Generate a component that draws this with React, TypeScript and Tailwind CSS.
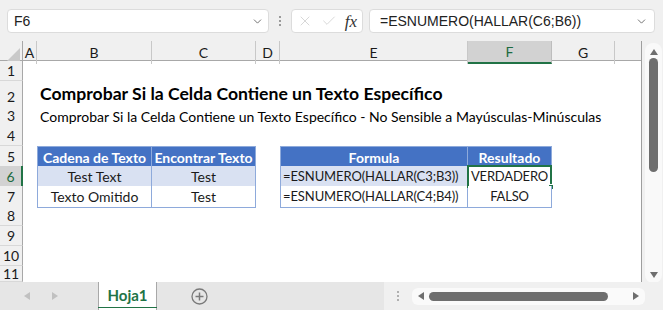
import { X, Check, ChevronDown } from "lucide-react";

const cols = "grid grid-cols-[23px_14px_115px_104px_24px_188px_84px_63px_27px]";
const rowHeights = [20, 25, 20, 20, 20, 20, 20, 20, 20, 20, 16];
const colLetters = ["A", "B", "C", "D", "E", "F", "G", ""];

const th = "flex items-center justify-center bg-[#4472c4] text-white font-bold border-r border-b border-t border-[#8eaadb]";
const td = "flex items-center justify-center border-r border-b border-[#8eaadb]";

function RowContent({ r }: { r: number }) {
  if (r === 2)
    return (
      <>
        <div />
        <div className="col-span-7 flex items-end pl-[3px] pb-[2px] text-[17.6px] font-bold text-black whitespace-nowrap">
          Comprobar Si la Celda Contiene un Texto Específico
        </div>
      </>
    );
  if (r === 3)
    return (
      <>
        <div />
        <div className="col-span-7 flex items-center pl-[3px] text-[14px] text-black whitespace-nowrap">
          Comprobar Si la Celda Contiene un Texto Específico - No Sensible a Mayúsculas-Minúsculas
        </div>
      </>
    );
  if (r === 5)
    return (
      <>
        <div />
        <div className={`${th} border-l`}>Cadena de Texto</div>
        <div className={th}>Encontrar Texto</div>
        <div />
        <div className={`${th} border-l`}>Formula</div>
        <div className={th}>Resultado</div>
      </>
    );
  if (r === 6 || r === 7) {
    const band = r === 6 ? "bg-[#d9e1f2]" : "bg-white";
    return (
      <>
        <div />
        <div className={`${td} ${band} border-l`}>{r === 6 ? "Test Text" : "Texto Omitido"}</div>
        <div className={`${td} ${band}`}>Test</div>
        <div />
        <div className={`${td} ${band} border-l justify-start pl-[2px] text-[13px] tracking-[-0.1px] whitespace-nowrap`}>
          {r === 6 ? "=ESNUMERO(HALLAR(C3;B3))" : "=ESNUMERO(HALLAR(C4;B4))"}
        </div>
        <div className={`${td} relative bg-white text-[13px] tracking-[-0.2px]`}>
          {r === 6 ? "VERDADERO" : "FALSO"}
          {r === 6 && (
            <div className="absolute -left-[1px] -top-[1px] -right-[1px] -bottom-[1px] border-2 border-[#217346]">
              <div className="absolute -right-[4px] -bottom-[4px] w-[6px] h-[6px] bg-[#217346] border border-white" />
            </div>
          )}
        </div>
      </>
    );
  }
  return null;
}

export default function App() {
  return (
    <div className="w-[663px] h-[310px] overflow-hidden bg-[#f0f0f0] flex flex-col font-['Lato',sans-serif] text-[14px] text-[#1a1a1a]">
      {/* Formula bar */}
      <div className="h-[41px] flex items-start pt-[9px] pl-[7px] shrink-0 font-['Liberation_Sans',sans-serif]">
        <div className="w-[262px] h-[24px] bg-white border border-[#dcdcdc] rounded-[4px] flex items-center pl-[6px] pr-[4px] text-[14px] text-[#222]">
          <span className="flex-1">F6</span>
          <ChevronDown size={13} strokeWidth={1.5} className="text-[#555]" />
        </div>
        <div className="w-[22px] h-[24px] flex flex-col items-center justify-center gap-[2px]">
          <div className="w-[2px] h-[2px] bg-[#9a9a9a]" />
          <div className="w-[2px] h-[2px] bg-[#9a9a9a]" />
          <div className="w-[2px] h-[2px] bg-[#9a9a9a]" />
        </div>
        <div className="w-[72px] h-[24px] bg-white border border-[#dcdcdc] rounded-[4px] flex items-center justify-between px-[5px]">
          <X size={16} strokeWidth={1} className="text-[#c2c2c2]" />
          <Check size={16} strokeWidth={1} className="text-[#c2c2c2]" />
          <span className="font-['Liberation_Serif',serif] italic text-[17px] text-[#333] leading-none">fx</span>
        </div>
        <div className="w-[286px] ml-[6px] h-[24px] bg-white border border-[#dcdcdc] rounded-[4px] flex items-center pl-[10px] pr-[6px] text-[14px] text-[#222]">
          <span className="flex-1">=ESNUMERO(HALLAR(C6;B6))</span>
          <ChevronDown size={13} strokeWidth={1.5} className="text-[#555]" />
        </div>
      </div>

      {/* Sheet + vertical scroll */}
      <div className="h-[241px] flex shrink-0">
        <div className="w-[642px] flex flex-col overflow-hidden border-r border-[#9e9e9e] bg-white">
          {/* Column headers */}
          <div className={`${cols} h-[20px] shrink-0 bg-[#f0f0f0] border-b border-[#a8a8a8]`}>
            <div className="border-r border-[#a8a8a8] flex items-end justify-end pr-[2px] pb-[2px]">
              <svg width="14" height="14" viewBox="0 0 14 14">
                <polygon points="14,0 14,14 0,14" fill="#c9c9c9" />
              </svg>
            </div>
            {colLetters.map((c, i) => (
              <div
                key={i}
                className={`flex items-center justify-center text-[14px] ${
                  c === "F"
                    ? "bg-[#d2d2d2] text-[#1d6b40] border-b-2 border-b-[#217346] border-r border-r-[#bdbdbd]"
                    : "border-r border-[#c8c8c8]"
                }`}
              >
                {c}
              </div>
            ))}
          </div>
          {rowHeights.map((h, i) => {
            const r = i + 1;
            return (
              <div key={r} className={`${cols} shrink-0`} style={{ height: h }}>
                <div
                  className={`flex items-center justify-center text-[14px] leading-none border-b border-[#d8d8d8] ${
                    r === 6
                      ? "bg-[#d2d2d2] text-[#1d6b40] border-r-2 border-r-[#217346]"
                      : "bg-[#f0f0f0] border-r border-r-[#a8a8a8]"
                  } ${r === 2 ? "items-end pb-[4px]" : ""}`}
                >
                  {r}
                </div>
                <RowContent r={r} />
              </div>
            );
          })}
        </div>
        {/* Vertical scrollbar */}
        <div className="flex-1 bg-[#f0f0f0] pt-[2px] pl-[3px] pr-[1px]">
          <div className="h-[240px] bg-[#f9f9f9] rounded-[8px] flex flex-col items-center pt-[4px]">
            <svg width="10" height="8" viewBox="0 0 10 8" className="mt-[1px]">
              <polygon points="5,1 9,7 1,7" fill="#6e6e6e" />
            </svg>
            <div className="w-[9px] h-[114px] bg-[#6e6e6e] rounded-full mt-[2px]" />
            <div className="flex-1" />
            <svg width="10" height="8" viewBox="0 0 10 8" className="mb-[4px]">
              <polygon points="1,1 9,1 5,7" fill="#6e6e6e" />
            </svg>
          </div>
        </div>
      </div>

      {/* Sheet tabs */}
      <div className="h-[28px] flex shrink-0 bg-[#e6e6e6]">
        <div className="w-[98px] flex items-center">
          <svg width="6" height="8" viewBox="0 0 6 8" className="ml-[24px]">
            <polygon points="6,0 6,8 0,4" fill="#c0c0c0" />
          </svg>
          <svg width="6" height="8" viewBox="0 0 6 8" className="ml-[22px]">
            <polygon points="0,0 0,8 6,4" fill="#c0c0c0" />
          </svg>
        </div>
        <div className="w-[59px] bg-white border-x border-[#a8a8a8] flex flex-col">
          <div className="flex-1 flex items-center justify-center font-bold text-[15px] text-[#217346] pt-[2px]">
            Hoja1
          </div>
          <div className="h-[3px] bg-[#217346] mb-[2px] -mx-[1px]" />
        </div>
        <div className="w-[227px] flex items-center pl-[34px]">
          <svg width="17" height="17" viewBox="0 0 17 17">
            <circle cx="8.5" cy="8.5" r="7.5" fill="none" stroke="#7a7a7a" strokeWidth="1.3" />
            <line x1="8.5" y1="4.5" x2="8.5" y2="12.5" stroke="#7a7a7a" strokeWidth="1.5" />
            <line x1="4.5" y1="8.5" x2="12.5" y2="8.5" stroke="#7a7a7a" strokeWidth="1.5" />
          </svg>
        </div>
        <div className="flex-1 bg-[#f0f0f0] flex items-center">
          <div className="w-[28px] flex flex-col items-center gap-[2px]">
            <div className="w-[2px] h-[2px] bg-[#b0b0b0]" />
            <div className="w-[2px] h-[2px] bg-[#b0b0b0]" />
            <div className="w-[2px] h-[2px] bg-[#b0b0b0]" />
          </div>
          <div className="w-[233px] h-[17px] bg-[#fafafa] rounded-[6px] flex items-center px-[5px]">
            <svg width="8" height="10" viewBox="0 0 8 10">
              <polygon points="7,1 7,9 1,5" fill="#6e6e6e" />
            </svg>
            <div className="w-[179px] h-[9px] bg-[#6e6e6e] rounded-full ml-[4px]" />
            <div className="flex-1" />
            <svg width="8" height="10" viewBox="0 0 8 10">
              <polygon points="1,1 1,9 7,5" fill="#6e6e6e" />
            </svg>
          </div>
        </div>
      </div>
    </div>
  );
}
